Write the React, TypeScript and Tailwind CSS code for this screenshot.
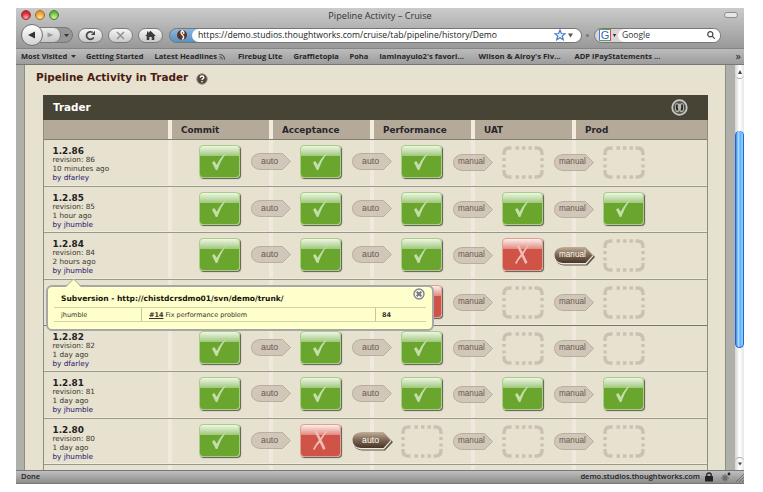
import React from "react";

type Result = "pass" | "fail" | "none";
type Gate = "auto" | "manual" | "auto-on" | "manual-on";

interface Run {
  label: string;
  revision: string;
  ago: string;
  by: string;
  stages: Result[];
  gates: Gate[];
  height: string;
  soft?: boolean;
}

const P: Result = "pass";
const F: Result = "fail";
const N: Result = "none";

const idle: Gate[] = ["auto", "auto", "manual", "manual"];

const runs: Run[] = [
  { label: "1.2.86", revision: "86", ago: "10 minutes ago", by: "dfarley", stages: [P, P, P, N, N], gates: idle, height: "h-[47px]" },
  { label: "1.2.85", revision: "85", ago: "1 hour ago", by: "jhumble", stages: [P, P, P, P, P], gates: idle, height: "h-[46px]" },
  { label: "1.2.84", revision: "84", ago: "2 hours ago", by: "jhumble", stages: [P, P, P, F, N], gates: ["auto", "auto", "manual", "manual-on"], height: "h-[47px]" },
  { label: "1.2.83", revision: "83", ago: "1 day ago", by: "dfarley", stages: [P, P, F, N, N], gates: idle, height: "h-[46px]", soft: true },
  { label: "1.2.82", revision: "82", ago: "1 day ago", by: "dfarley", stages: [P, P, P, N, N], gates: idle, height: "h-[46px]" },
  { label: "1.2.81", revision: "81", ago: "1 day ago", by: "jhumble", stages: [P, P, P, P, P], gates: idle, height: "h-[47px]" },
  { label: "1.2.80", revision: "80", ago: "1 day ago", by: "jhumble", stages: [P, F, N, N, N], gates: ["auto", "auto-on", "manual", "manual"], height: "h-[46px]" },
];

const stageNames = ["Commit", "Acceptance", "Performance", "UAT", "Prod"];

function StageBox({ result }: { result: Result }) {
  if (result === "none") {
    return (
      <svg className="mt-[6px] h-[33px] w-[42px] shrink-0" viewBox="0 0 42 33" fill="none" stroke="#cbc1b3" strokeWidth="3.4">
        <path d="M2 9 V7.5 Q2 2 7.500 2 H9.500 M32.500 2 H34.500 Q40 2 40 7.500 V9 M40 24 V25.500 Q40 31 34.500 31 H32.500 M9.500 31 H7.500 Q2 31 2 25.500 V24" />
        <path d="M13.500 2 H17 M20 2 H23.500 M26.500 2 H30 M13.500 31 H17 M20 31 H23.500 M26.500 31 H30 M2 12 V15 M2 18.500 V21.500 M40 12 V15 M40 18.500 V21.500" />
      </svg>
    );
  }
  const pass = result === "pass";
  return (
    <div
      className={
        "mt-[5px] flex h-[33px] w-[41px] mr-px shrink-0 items-center justify-center rounded-[4px] border shadow-[1px_1px_1px_#5c5b50] " +
        (pass
          ? "border-[#a5cf81] bg-[linear-gradient(to_bottom,#eff5e6_0%,#a2ca7f_31%,#6aa62d_33%,#6aa62d_100%)]"
          : "border-[#e39d92] bg-[linear-gradient(to_bottom,#fbefec_0%,#e28f85_31%,#cf5346_33%,#cf5346_100%)]")
      }
    >
      {pass ? (
        <svg className="h-[19px] w-[17px]" viewBox="0 0 17 19" fill="#c4deaa">
          <path d="M1 10.500 L3.200 9 L5.800 12.800 Q9.500 5 15.500 0.500 Q9.500 8.500 6.300 18 H4.800 Z" />
        </svg>
      ) : (
        <svg className="h-[21px] w-[17px]" viewBox="0 0 17 21" fill="#f0bdb5">
          <path d="M2.500 1.500 L5 1 L8.500 8 L14 0.500 H15.500 L9.500 10 L13.500 18.500 L11.300 20 L7.800 12.500 Q4 16 2.500 20 L1 19 Q3.500 14 6.800 10.200 Z" />
        </svg>
      )}
    </div>
  );
}

function GatePill({ gate }: { gate: Gate }) {
  const active = gate.endsWith("-on");
  const manual = gate.startsWith("manual");
  return (
    <div className={"relative z-10 ml-[9px] h-[20px] w-[42px] shrink-0 " + (manual ? "mt-[13px]" : "mt-[12px]")}>
      <svg className="absolute inset-0 h-[20px] w-[42px]" viewBox="0 0 42 20">
        {active ? (
          <>
            <defs>
              <linearGradient id="gateOn" x1="0" y1="0" x2="0" y2="1">
                <stop offset="0" stopColor="#c0b098" />
                <stop offset="0.5" stopColor="#7c6653" />
                <stop offset="1" stopColor="#493528" />
              </linearGradient>
            </defs>
            <path d="M11 3 H34 L42 11 L34 19.500 H11 Q4 18.500 3 14 Z" fill="#57534b" />
            <path d="M10 1.500 H33 L40.500 10 L33 18.500 H10 Q1.500 17 1.500 10 Q1.500 3 10 1.500 Z" fill="#eee7da" />
            <path d="M10 1 H32.500 L39.500 9.500 L32.500 17 H10 Q1.500 16 1.500 9 Q1.500 2 10 1 Z" fill="url(#gateOn)" />
          </>
        ) : (
          <path d="M10 1.500 H32.500 L40.500 9.500 L32.500 17.500 H10 Q1.500 16.500 1.500 9.500 Q1.500 2.500 10 1.500 Z" fill="#cbc1b1" fillOpacity="0.8" stroke="#b9ad9f" strokeWidth="1" />
        )}
      </svg>
      <div
        className={
          "relative whitespace-nowrap pt-[3px] font-['Liberation_Sans',Arial,sans-serif] leading-[12px] " +
          (manual ? "pl-[6px] text-[8.2px] " : "pl-[11px] text-[8.8px] ") +
          (active ? "text-[#fffaf2]" : "text-[#6b5a4f]")
        }
      >
        {manual ? "manual" : "auto"}
      </div>
    </div>
  );
}

function RunRow({ run }: { run: Run }) {
  return (
    <div className={"flex shrink-0 border-b shadow-[inset_0_-1px_0_#f0eadc] " + run.height + " " + (run.soft ? "border-[#77756a]" : "border-[#99988b]")}>
      <div className="w-[124px] shrink-0 whitespace-nowrap pl-[8.500px] pt-[5.500px] text-[7.25px] leading-[8.800px] text-[#37352f]">
        <div className="text-[8.9px] font-bold leading-[10.500px] text-[#222]">{run.label}</div>
        <div>revision: {run.revision}</div>
        <div>{run.ago}</div>
        <div className="text-[#1c146d]">by {run.by}</div>
      </div>
      {run.stages.map((s, i) => (
        <div key={i} className={"flex h-full shrink-0 border-l-4 border-[#f1e9dd] pl-[27px] " + (i === 4 ? "w-[135px]" : "w-[101px]")}>
          <StageBox result={s} />
          {i < 4 && <GatePill gate={run.gates[i]} />}
        </div>
      ))}
    </div>
  );
}

function Tooltip() {
  return (
    <div className="absolute left-[2px] top-[190px] z-20 h-[46px] w-[388px] rounded-[6px] border-2 border-[#a7a7a5] bg-[#feffca] px-[6px] text-[6.5px] text-[#33332b]">
      <svg className="absolute left-[17px] top-[-9px] h-[10px] w-[18px]" viewBox="0 0 18 10">
        <path d="M1 9 L8.500 1 L16 9 V10 H1 Z" fill="#feffca" />
        <path d="M1 8.500 L8.500 1 L16 8.500" fill="none" stroke="#aaa991" />
      </svg>
      <svg className="absolute right-[7px] top-[1px] h-[12px] w-[12px]" viewBox="0 0 12 12">
        <circle cx="6" cy="6" r="5" fill="#f4f4ee" stroke="#85858a" strokeWidth="1.4" />
        <path d="M3.700 3.700 L8.300 8.300 M8.300 3.700 L3.700 8.300" stroke="#77777c" strokeWidth="2" />
      </svg>
      <div className="flex h-[20px] items-center whitespace-nowrap pl-[7px] pt-[4px] text-[7.55px] font-bold text-[#151510]">
        Subversion - http://chistdcrsdmo01/svn/demo/trunk/
      </div>
      <div className="flex h-[15px] whitespace-nowrap border-y border-[#d2d2a6] leading-[14px]">
        <div className="w-[88px] border-r border-[#c5c59b] pl-[7px]">jhumble</div>
        <div className="w-[234px] border-r border-[#c5c59b] pl-[7px]">
          <span className="font-bold underline">#14</span> Fix performance problem
        </div>
        <div className="pl-[6px] font-bold">84</div>
      </div>
    </div>
  );
}

const pillBtn =
  "flex h-[15px] shrink-0 items-center justify-center rounded-full border border-[#7b7b7b] bg-gradient-to-b from-[#f6f6f6] to-[#c9c9c9]";

function Toolbar() {
  return (
    <div className="flex h-[26px] shrink-0 items-center pl-[5px]">
      <div className="flex h-[16px] w-[52px] items-center rounded-full border border-[#787878] bg-[#969696]">
        <div className="z-10 -ml-px flex h-[22px] w-[22px] shrink-0 items-center justify-center rounded-full border-[1.500px] border-[#737373] bg-gradient-to-b from-white to-[#d2d2d2]">
          <svg className="h-[8px] w-[8px]" viewBox="0 0 8 8"><path d="M0 4 L7 0.500 V7.500 Z" fill="#333" /></svg>
        </div>
        <div className="-ml-[4px] flex h-[14px] w-[22px] items-center justify-center rounded-r-full border-r border-[#777] bg-gradient-to-b from-[#eee] to-[#c6c6c6]">
          <svg className="ml-[2px] h-[6px] w-[7px]" viewBox="0 0 7 6"><path d="M0.500 0.500 L6.500 3 L0.500 5.500 Z" fill="#999" /></svg>
        </div>
        <svg className="ml-[3px] h-[3px] w-[5px]" viewBox="0 0 5 3"><path d="M0 0 H5 L2.500 3 Z" fill="#333" /></svg>
      </div>
      <div className={pillBtn + " ml-[5px] w-[25px]"}>
        <svg className="h-[11px] w-[11px]" viewBox="0 0 11 11" fill="none" stroke="#444" strokeWidth="1.7">
          <path d="M8.700 7.300 A3.800 3.800 0 1 1 7.600 2.500" />
          <path d="M6 5 H10 V0.800 Z" fill="#444" stroke="none" />
        </svg>
      </div>
      <div className={pillBtn + " ml-[5px] w-[25px]"}>
        <svg className="h-[9px] w-[9px]" viewBox="0 0 9 9" stroke="#8c8c8c" strokeWidth="1.4"><path d="M1 1 L8 8 M8 1 L1 8" /></svg>
      </div>
      <div className={pillBtn + " ml-[5px] w-[25px]"}>
        <svg className="h-[11px] w-[11px]" viewBox="0 0 11 11" fill="#3c3c3c"><path d="M5.500 0.800 L10.800 6 H9.300 V10 H6.700 V7 H4.300 V10 H1.700 V6 H0.200 L2 4.200 V1.500 H3.300 V3 Z" /></svg>
      </div>
      <div className="ml-[6px] flex h-[15px] w-[413px] items-center rounded-full border border-[#777] bg-gradient-to-b from-[#8db7df] to-[#5b8fc4]">
        <svg className="ml-[6px] h-[12px] w-[12px] shrink-0" viewBox="0 0 12 12">
          <circle cx="6" cy="6" r="5" fill="#5a3527" />
          <path d="M6 1.500 Q8.500 3 7.500 5 M6 1.500 Q4 4 6.500 6 Q9 8.500 6 10.500" fill="none" stroke="#f2ece4" strokeWidth="1.500" />
        </svg>
        <div className="ml-[4px] flex h-[13px] flex-1 items-center rounded-full bg-white pl-[6px] font-['Open_Sans','Noto_Sans',sans-serif] text-[8.65px] text-[#222]">
          <span className="w-[356px] whitespace-nowrap pt-px">https://demo.studios.thoughtworks.com/cruise/tab/pipeline/history/Demo</span>
          <svg className="h-[12px] w-[12px] shrink-0" viewBox="0 0 12 12"><path d="M6 1 L7.400 4.500 L11.200 4.700 L8.300 7 L9.300 10.800 L6 8.700 L2.700 10.800 L3.700 7 L0.800 4.700 L4.600 4.500 Z" fill="#e8f2ff" stroke="#4a7cc9" strokeWidth="1.200" /></svg>
          <svg className="ml-[2px] h-[5px] w-[5px] shrink-0" viewBox="0 0 6 5"><path d="M0 0 H6 L3 5 Z" fill="#555" /></svg>
        </div>
      </div>
      <div className="ml-[4px] h-[3px] w-[3px] rounded-full bg-[#777]" />
      <div className="ml-[5px] flex h-[15px] w-[127px] items-center rounded-full border border-[#777] bg-[#d7d7d7]">
        <div className="ml-[4px] flex h-[12px] w-[12px] shrink-0 items-center justify-center border border-b-[#58a84c] border-l-[#4d7be0] border-r-[#e04434] border-t-[#58a84c] bg-white font-['Liberation_Sans',sans-serif] text-[11px] leading-none text-[#3c64c0]">G</div>
        <svg className="ml-[2px] h-[3px] w-[3px] shrink-0" viewBox="0 0 3 3"><path d="M0 0 H3 L1.500 3 Z" fill="#222" /></svg>
        <div className="ml-[2px] flex h-[13px] flex-1 items-center justify-between rounded-full bg-white pl-[4px] pr-[5px] font-['Open_Sans',sans-serif] text-[8.500px] text-[#333]">
          <span className="pt-px">Google</span>
          <svg className="h-[8px] w-[8px]" viewBox="0 0 8 8" fill="none" stroke="#444" strokeWidth="1.200"><circle cx="3.300" cy="3.300" r="2.600" /><path d="M5.200 5.200 L7.700 7.700" /></svg>
        </div>
      </div>
    </div>
  );
}

function Bookmarks() {
  return (
    <div className="flex h-[17px] shrink-0 items-center whitespace-nowrap border-b border-t border-b-[#777] border-t-[#848484] bg-gradient-to-b from-[#bcbcbc] to-[#9d9d9d] pl-[5px] font-['Open_Sans','Noto_Sans',sans-serif] text-[7.500px] font-bold text-[#262626]">
      <span className="flex w-[65px] shrink-0 items-center gap-[4px]">
        Most Visited
        <svg className="h-[3px] w-[5px]" viewBox="0 0 5 3"><path d="M0 0 H5 L2.500 3 Z" fill="#333" /></svg>
      </span>
      <span className="w-[68.500px] shrink-0">Getting Started</span>
      <span className="flex w-[83.500px] shrink-0 items-center gap-[2px]">
        Latest Headlines
        <svg className="h-[6px] w-[6px]" viewBox="0 0 6 6" fill="none" stroke="#333" strokeWidth="0.900"><path d="M0.500 0.500 Q5.500 0.500 5.500 5.500 M0.500 2.700 Q3.300 2.700 3.300 5.500 M0.500 5 H1.200" /></svg>
      </span>
      <span className="w-[55.500px] shrink-0">Firebug Lite</span>
      <span className="w-[56px] shrink-0">Graffletopia</span>
      <span className="w-[30px] shrink-0">Poha</span>
      <span className="w-[99px] shrink-0 text-[7.700px]">laminayuio2's favori...</span>
      <span className="w-[96px] shrink-0 text-[7.800px]">Wilson &amp; Alroy's Fiv...</span>
      <span className="flex-1 text-[7.600px]">ADP iPayStatements ...</span>
      <span className="pr-[3px] text-[11px] font-normal">»</span>
    </div>
  );
}

export default function App() {
  return (
    <div className="h-[492px] w-[763px] overflow-hidden bg-white pl-[16px] pt-[8px] font-['DejaVu_Sans',Verdana,sans-serif]">
      <div className="flex h-[476px] w-[728px] flex-col">
        <div className="flex h-[40px] shrink-0 flex-col bg-gradient-to-b from-[#cbcbcb] to-[#999]">
          <div className="flex h-[14px] shrink-0 items-center pl-[5px]">
            <div className="flex w-[70px] gap-[4px]">
              <div className="h-[10px] w-[10px] rounded-full border border-[#8f3434] bg-[radial-gradient(circle_at_50%_80%,#ffa9a9,#dc2331_60%)]" />
              <div className="h-[10px] w-[10px] rounded-full border border-[#a36c2c] bg-[radial-gradient(circle_at_50%_80%,#ffe98c,#ee9325_70%)]" />
              <div className="h-[10px] w-[10px] rounded-full border border-[#4b7a35] bg-[radial-gradient(circle_at_50%_80%,#d3f5a2,#59b535_70%)]" />
            </div>
            <div className="flex-1 pr-[55px] pt-[2px] text-center font-['Open_Sans','Noto_Sans',sans-serif] text-[9.200px] leading-[12px] text-[#333]">Pipeline Activity – Cruise</div>
            <div className="mr-[6px] h-[6px] w-[14px] rounded-full border border-[#8d8d8d] bg-[#e7e7e7]" />
          </div>
          <Toolbar />
        </div>
        <Bookmarks />
        <div className="flex h-[405px] shrink-0 overflow-hidden">
          <div className="w-[8px] shrink-0 bg-[#aeb0a9]" />
          <div className="w-[702px] shrink-0 border-x border-[#8d8e82] bg-[#e7e1d0]">
            <div className="flex h-[30px] items-center pb-[4px] pl-[11px]">
              <h1 className="whitespace-nowrap text-[10.450px] font-bold text-[#4a1b10]">Pipeline Activity in Trader</h1>
              <svg className="ml-[8px] mt-[2px] h-[12px] w-[12px]" viewBox="0 0 12 12">
                <circle cx="6" cy="6" r="5.200" fill="#51453c" stroke="#968d82" />
                <path d="M4.200 4.600 Q4.300 3 6 3 Q7.800 3 7.800 4.500 Q7.800 5.400 6.700 5.900 Q6 6.200 6 7 M6 8 V9.300" fill="none" stroke="#fff" strokeWidth="1.400" />
              </svg>
            </div>
            <div className="relative ml-[18px] w-[665px] border-x border-[#8d8e82]">
              <div className="-mx-px flex h-[25px] items-center justify-between bg-[#474335] pl-[10px] pr-[20px]">
                <h2 className="text-[10.400px] font-bold text-white">Trader</h2>
                <svg className="h-[17px] w-[17px]" viewBox="0 0 17 17">
                  <circle cx="8.500" cy="8.500" r="7.300" fill="#55564f" stroke="#c9c9c4" strokeWidth="1.700" />
                  <path d="M4 6 Q4 4.200 5.800 4.200 Q7.600 4.200 8.500 5 Q9.400 4.200 11.200 4.200 Q13 4.200 13 6 V10 Q12.500 13.200 10.600 13.200 Q9 13.200 8.500 11.500 Q8 13.200 6.400 13.200 Q4.500 13.200 4 10 Z" fill="#b9b9b2" />
                  <path d="M5.800 5.500 V9 L6.600 11.500 M11.200 5.500 V9 L10.400 11.500" fill="none" stroke="#24241f" strokeWidth="1.900" />
                </svg>
              </div>
              <div className="flex h-[20px] border-b border-[#827e70] bg-[#b5aa9a] text-[8.850px] font-bold text-[#26252a]">
                <div className="w-[124px] shrink-0" />
                {stageNames.map((n, i) => (
                  <div key={n} className={"flex shrink-0 items-center border-l-4 border-[#f2ebde] pl-[9px] pt-[2px] " + (i === 4 ? "flex-1" : "w-[101px]")}>
                    {n}
                  </div>
                ))}
              </div>
              {runs.map((r) => (
                <RunRow key={r.label} run={r} />
              ))}
              <div className="flex h-[8px]">
                <div className="w-[124px] shrink-0" />
                {stageNames.map((n) => (
                  <div key={n} className="w-[101px] shrink-0 border-l-4 border-[#f1e9dd]" />
                ))}
              </div>
              <Tooltip />
            </div>
          </div>
          <div className="w-[9px] shrink-0 bg-[#afb0aa]" />
          <div className="flex w-[9px] shrink-0 flex-col items-center bg-gradient-to-r from-[#d4d4d4] via-white to-[#e6e6e6]">
            <div className="flex h-[14px] w-full items-center justify-center rounded-b-full border-b border-[#aaa]">
              <svg className="h-[4px] w-[4px]" viewBox="0 0 5 5"><path d="M0 5 L2.500 0 L5 5 Z" fill="#444" /></svg>
            </div>
            <div className="mt-[52px] h-[217px] w-full shrink-0 rounded-full border-x border-b border-[#2462ce] bg-[linear-gradient(to_right,#3b87ed,#a9dcff_35%,#5fb0fa_60%,#8ddcff)]" />
            <div className="flex-1" />
            <div className="flex h-[13px] w-full items-center justify-center rounded-t-full border-t border-[#aaa]">
              <svg className="h-[4px] w-[4px]" viewBox="0 0 5 4"><path d="M0 0 L2.500 4 L5 0 Z" fill="#444" /></svg>
            </div>
          </div>
        </div>
        <div className="flex h-[14px] shrink-0 items-center whitespace-nowrap border-b border-t border-b-[#777] border-t-[#777] bg-gradient-to-b from-[#bfbfbf] to-[#8d8d8d] pl-[5px] font-['Open_Sans','Noto_Sans',sans-serif] text-[7.500px] font-semibold text-[#1e1e1e]">
          <span className="flex-1">Done</span>
          <span>demo.studios.thoughtworks.com</span>
          <svg className="ml-[5px] h-[10px] w-[8px]" viewBox="0 0 8 10"><rect y="4" width="8" height="5.500" rx="0.500" fill="#222" /><path d="M1.800 4.500 V3 Q1.800 1 4 1 Q6.200 1 6.200 3 V4.500" fill="none" stroke="#222" strokeWidth="1.300" /></svg>
          <svg className="ml-[7px] h-[11px] w-[11px]" viewBox="0 0 11 11"><path d="M5 2 V10 M1 6 H9 M2.500 3.500 L7.500 8.500 M7.500 3.500 L2.500 8.500" stroke="#6a6a6a" strokeWidth="1.200" /><circle cx="9" cy="2" r="1.400" fill="#222" /></svg>
          <svg className="ml-[5px] mt-[2px] h-[8px] w-[8px]" viewBox="0 0 8 8"><path d="M0 8 L8 0 M3 8 L8 3 M6 8 L8 6" stroke="#666" strokeWidth="0.800" /></svg>
        </div>
      </div>
    </div>
  );
}
